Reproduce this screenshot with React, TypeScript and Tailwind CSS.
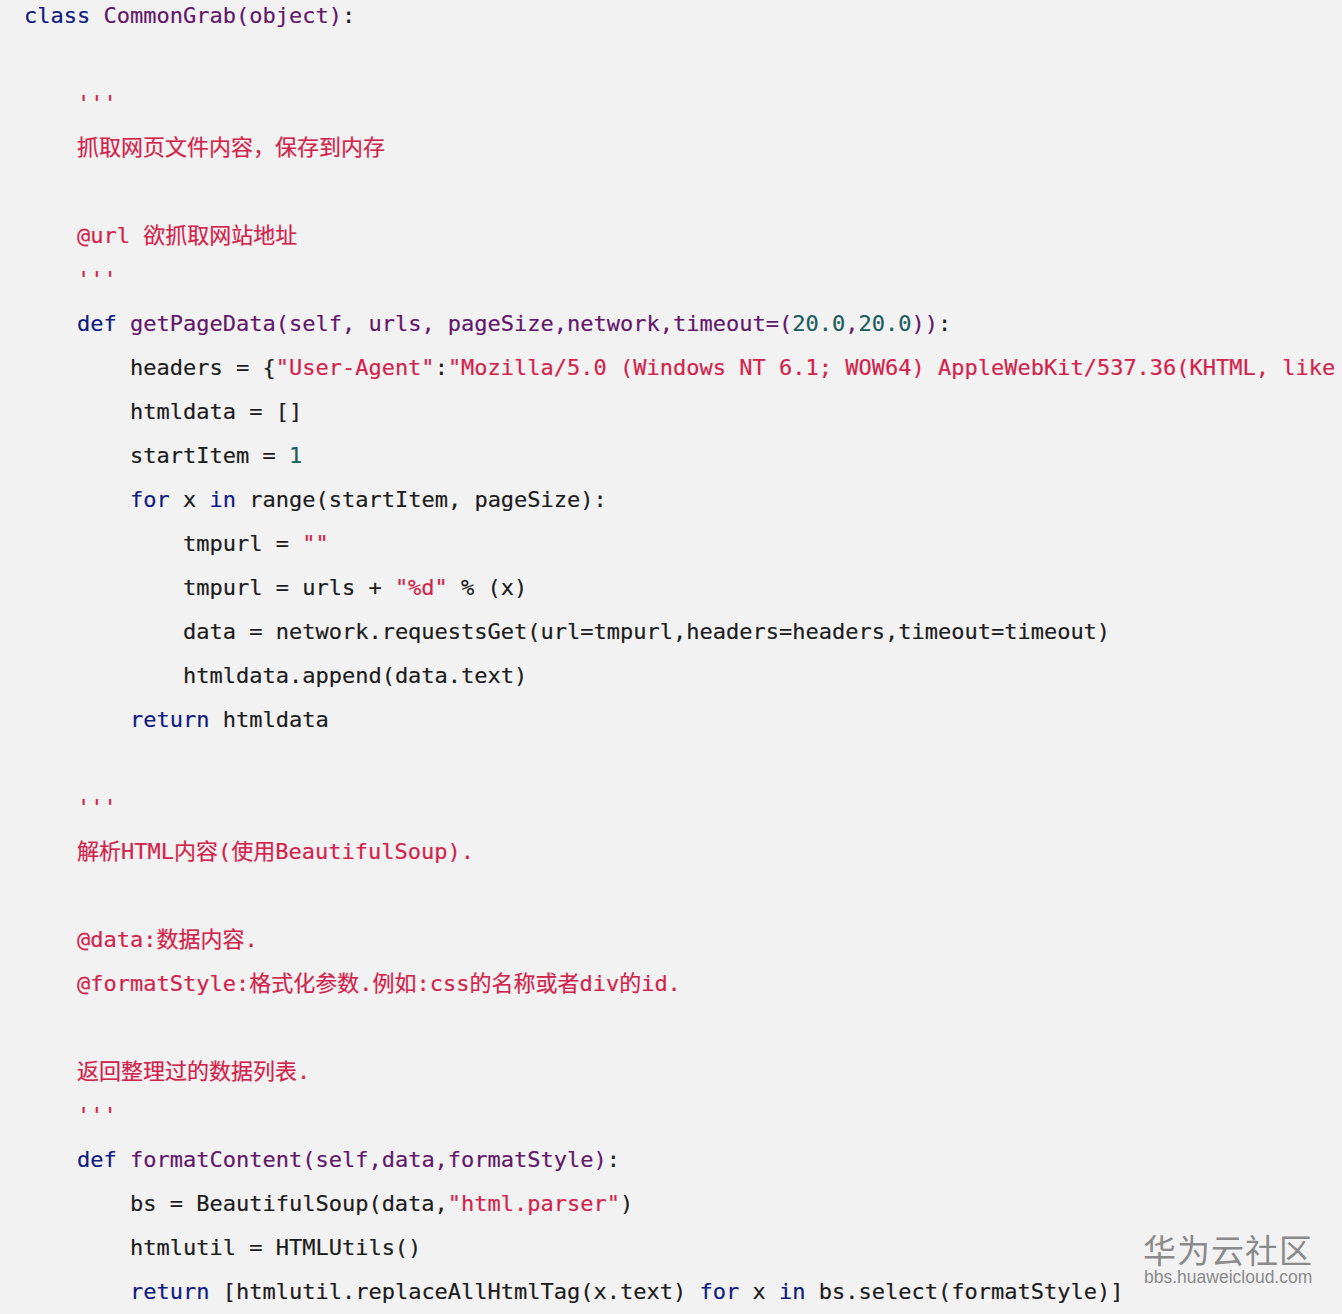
import React from "react";

const K = ({ children }: { children: React.ReactNode }) => <span className="text-[#0f1b80]">{children}</span>;
const P = ({ children }: { children: React.ReactNode }) => <span className="text-[#62186a]">{children}</span>;
const S = ({ children }: { children: React.ReactNode }) => <span className="text-[#d1244c]">{children}</span>;
const N = ({ children }: { children: React.ReactNode }) => <span className="text-[#1b5e5e]">{children}</span>;

const Line = ({ children }: { children?: React.ReactNode }) => (
  <div className="h-[44px] leading-[44px] whitespace-pre">{children ?? " "}</div>
);

export default function App() {
  return (
    <div className="relative w-[1342px] h-[1314px] overflow-hidden bg-[#f2f2f2]">
      <div
        className="mt-[-6px] pl-[25px] text-[22px] text-[#1c1c1c] [-webkit-text-stroke:0.2px]"
        style={{ fontFamily: '"DejaVu Sans Mono", "Noto Sans CJK SC", monospace', marginLeft: -1 }}
      >
        <Line>
          <K>class</K> <P>CommonGrab(object)</P>:
        </Line>
        <Line />
        <Line>
          {"    "}
          <S>'''</S>
        </Line>
        <Line>
          {"    "}
          <S>抓取网页文件内容，保存到内存</S>
        </Line>
        <Line />
        <Line>
          {"    "}
          <S>@url 欲抓取网站地址</S>
        </Line>
        <Line>
          {"    "}
          <S>'''</S>
        </Line>
        <Line>
          {"    "}
          <K>def</K> <P>getPageData(self, urls, pageSize,network,timeout=(</P>
          <N>20.0</N>
          <P>,</P>
          <N>20.0</N>
          <P>))</P>:
        </Line>
        <Line>
          {"        "}headers = {"{"}
          <S>"User-Agent"</S>:<S>"Mozilla/5.0 (Windows NT 6.1; WOW64) AppleWebKit/537.36(KHTML, like</S>
        </Line>
        <Line>{"        "}htmldata = []</Line>
        <Line>
          {"        "}startItem = <N>1</N>
        </Line>
        <Line>
          {"        "}
          <K>for</K> x <K>in</K> range(startItem, pageSize):
        </Line>
        <Line>
          {"            "}tmpurl = <S>""</S>
        </Line>
        <Line>
          {"            "}tmpurl = urls + <S>"%d"</S> % (x)
        </Line>
        <Line>{"            "}data = network.requestsGet(url=tmpurl,headers=headers,timeout=timeout)</Line>
        <Line>{"            "}htmldata.append(data.text)</Line>
        <Line>
          {"        "}
          <K>return</K> htmldata
        </Line>
        <Line />
        <Line>
          {"    "}
          <S>'''</S>
        </Line>
        <Line>
          {"    "}
          <S>解析HTML内容(使用BeautifulSoup).</S>
        </Line>
        <Line />
        <Line>
          {"    "}
          <S>@data:数据内容.</S>
        </Line>
        <Line>
          {"    "}
          <S>@formatStyle:格式化参数.例如:css的名称或者div的id.</S>
        </Line>
        <Line />
        <Line>
          {"    "}
          <S>返回整理过的数据列表.</S>
        </Line>
        <Line>
          {"    "}
          <S>'''</S>
        </Line>
        <Line>
          {"    "}
          <K>def</K> <P>formatContent(self,data,formatStyle)</P>:
        </Line>
        <Line>
          {"        "}bs = BeautifulSoup(data,<S>"html.parser"</S>)
        </Line>
        <Line>{"        "}htmlutil = HTMLUtils()</Line>
        <Line>
          {"        "}
          <K>return</K> [htmlutil.replaceAllHtmlTag(x.text) <K>for</K> x <K>in</K> bs.select(formatStyle)]
        </Line>
      </div>
      <div className="absolute left-[1143px] top-[1231px] flex flex-col items-start text-[#8a8a8a]">
        <div
          className="text-[33px] leading-[36px] tracking-[1px]"
          style={{ fontFamily: '"Noto Sans CJK SC", sans-serif' }}
        >
          华为云社区
        </div>
        <div
          className="text-[17.5px] leading-[20px] pl-[1px]"
          style={{ fontFamily: '"Liberation Sans", Arial, sans-serif' }}
        >
          bbs.huaweicloud.com
        </div>
      </div>
    </div>
  );
}
